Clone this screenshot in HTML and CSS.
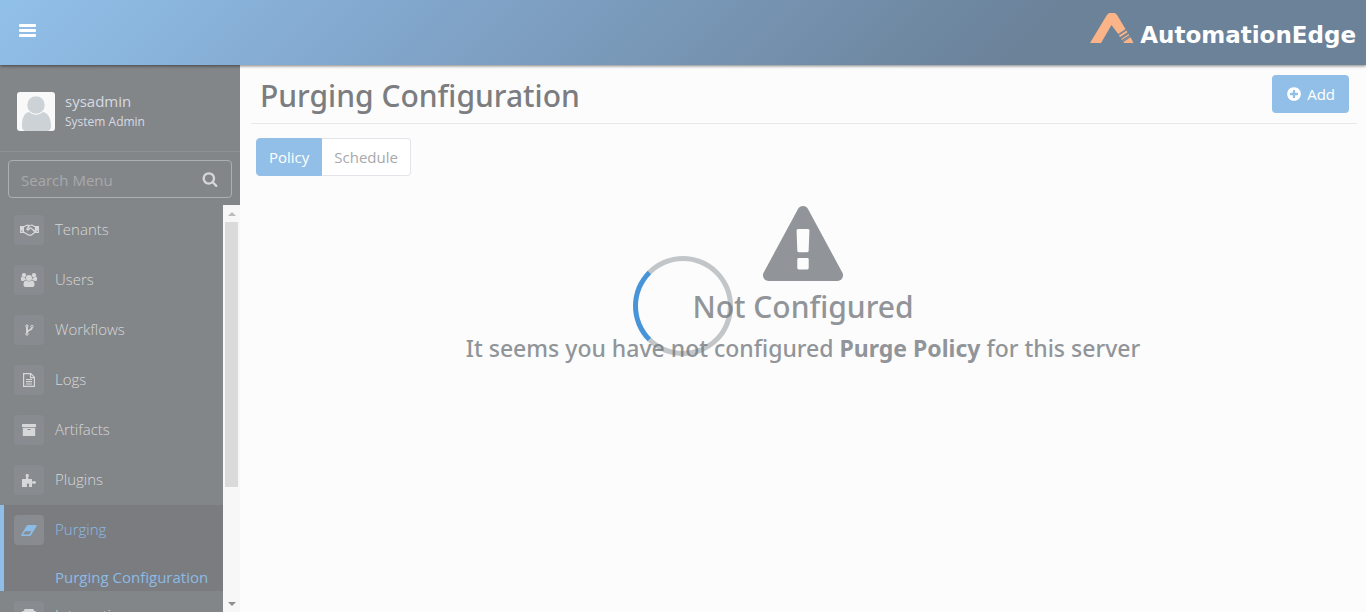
FILE: index.html
```html
<!DOCTYPE html>
<html lang="en">
<head>
<meta charset="utf-8">
<title>Purging Configuration - AutomationEdge</title>
<link rel="stylesheet" href="styles.css">
</head>
<body>
<header class="topbar">
  <button class="menu-toggle" type="button" aria-label="Toggle menu">
    <svg width="17" height="13" viewBox="0 0 17 13"><rect width="17" height="3" rx="1"/><rect y="5" width="17" height="3" rx="1"/><rect y="10" width="17" height="3" rx="1"/></svg>
  </button>
  <a class="brand" href="#">
    <svg width="44" height="31" viewBox="0 0 44 31" aria-hidden="true">
      <path fill="#fab487" d="M0 30 16 3.500Q18-.5 22-.5T28 3.500L36 17 29 22 21.500 12 11 30Z"/>
      <path fill="#fab487" d="M29 22.500 36.500 17.500 38 20 30.500 25ZM31.200 26 38.600 21 40 23.300 32.800 28ZM33.500 29 40.600 24.300 43.500 30H34Z"/>
      <path stroke="#6b8299" stroke-width="1.200" d="m27 22.500 10-6.500M29 25.500l10-6.500M30.500 28.500l10-6.500"/>
    </svg>
    <span class="brand-name">AutomationEdge</span>
  </a>
</header>
<div class="shell">
  <aside class="sidebar">
    <div class="profile">
      <svg class="avatar" width="38" height="39" viewBox="0 0 38 39" aria-hidden="true"><rect width="38" height="39" rx="3" fill="#f9f9f9"/><path fill="#cdd2d6" d="M5 34C5 26 7 21 12 20q7 5 14 0c5 1 8 6 8 14q0 4-3 5H8q-3-1-3-5Z"/><circle cx="19" cy="13" r="9.200" fill="#cdd2d6" stroke="#f9f9f9"/></svg>
      <div class="profile-text"><span class="user-name">sysadmin</span><span class="user-role">System Admin</span></div>
    </div>
    <form class="search">
      <input type="text" placeholder="Search Menu" aria-label="Search Menu">
      <button type="button" aria-label="Search"><svg width="16" height="16" viewBox="0 0 1792 1792"><path d="M1216 832q0-185-131.500-316.500t-316.500-131.500-316.500 131.500-131.500 316.500 131.500 316.500 316.500 131.500 316.500-131.500 131.500-316.500zm512 832q0 52-38 90t-90 38q-54 0-90-38l-343-342q-179 124-399 124-143 0-273.500-55.500t-225-150-150-225-55.500-273.500 55.500-273.500 150-225 225-150 273.500-55.500 273.500 55.500 225 150 150 225 55.500 273.500q0 220-124 399l343 343q37 37 37 90z"/></svg></button>
    </form>
    <div class="menu-area">
      <nav class="menu">
        <a class="item" href="#"><span class="tile"><svg width="19" height="12" viewBox="0 0 19 12"><path fill-rule="evenodd" d="M0 2h4l3-1.500 2.500.5L12 .500 15 2h4v7h-4l-3.500 2.700H8.500L4 9H0ZM1.200 6.500v1.200h1.200V6.500ZM16.600 6.500v1.200h1.200V6.500ZM4 3.300v4.200l4.700 3h2.500l3-2.600L10.500 4.600 9 6.300c-1.500 1-3-.2-2.500-1.500L8 2 7 1.800ZM8 5.200l2.500-2.300L14.800 6.500V3.300L12 1.800H10Z"/></svg></span><span class="label">Tenants</span></a>
        <a class="item" href="#"><span class="tile"><svg width="16" height="14" viewBox="0 0 16 14"><circle cx="3" cy="2.200" r="2.100"/><circle cx="13" cy="2.200" r="2.100"/><path d="M0 7V5q0-1.500 1.200-1.200Q3 5 4.300 4.200 4 6 5 7 3.500 7 2.500 8H1.200Q0 8 0 7ZM16 7V5q0-1.500-1.200-1.200Q13 5 11.700 4.200 12 6 11 7q1.500 0 2.500 1h1.300Q16 8 16 7Z"/><circle cx="8" cy="5" r="3"/><path d="M2.500 12q0-4.500 2.700-4.500 2.800 2 5.600 0 2.700 0 2.700 4.500 0 2-2 2h-7q-2 0-2-2Z"/></svg></span><span class="label">Users</span></a>
        <a class="item" href="#"><span class="tile"><svg width="9" height="12" viewBox="0 0 9 12"><g fill="none" stroke="currentColor"><circle cx="2" cy="2" r="1.200"/><circle cx="2" cy="10" r="1.200"/><circle cx="7" cy="2.500" r="1.200"/><path stroke-width="1.800" d="M2 3v6M7 3.500C7 6.500 2.500 5.500 2.200 8.500"/></g></svg></span><span class="label">Workflows</span></a>
        <a class="item" href="#"><span class="tile"><svg width="12" height="14" viewBox="0 0 12 14"><path fill="none" stroke="currentColor" stroke-width="1.200" d="M.6.6h7.200l3.600 3.600v9.200H.6ZM7.500.6v4h4M3 6.500h6M3 8.700h6M3 11h6"/></svg></span><span class="label">Logs</span></a>
        <a class="item" href="#"><span class="tile"><svg width="14" height="12" viewBox="0 0 14 12"><path fill-rule="evenodd" d="M.5 0h13q.5 0 .5.500V3H0V.500Q0 0 .5 0ZM.8 3.700h12.400V11.500q0 .5-.5.500H1.300q-.5 0-.5-.5ZM5.500 4.900v1h3v-1Z"/></svg></span><span class="label">Artifacts</span></a>
        <a class="item" href="#"><span class="tile"><svg width="14" height="13" viewBox="0 0 14 13"><path d="M0 5h3.700Q4.700 4 4 3 2.800 0 5.200 0T6.400 3Q5.700 4 6.700 5H10V7.200Q10.500 8 11.500 7.200C14.800 6.300 14.800 10.800 11.500 9.700Q10.500 9 10 9.700V13H7Q6.700 12 7.200 11.300C7.700 9 4.300 9 4.800 11.300Q5.300 12 4.800 13H0Z"/></svg></span><span class="label">Plugins</span></a>
        <div class="group">
          <a class="item active" href="#"><span class="tile"><svg width="16" height="11" viewBox="0 0 16 11"><path fill-rule="evenodd" d="M6.800 0h8q1.200 0 .9 1L10.300 9.700Q9.500 11 8.300 11h-7Q-.3 11 .3 9.500L5.700.800Q6.200 0 6.800 0ZM2 9.500h6l2.500-3.200H4.300Z"/></svg></span><span class="label">Purging</span></a>
          <a class="subitem" href="#">Purging Configuration</a>
        </div>
        <a class="item" href="#"><span class="tile"><svg width="14" height="14" viewBox="0 0 14 14"><path d="M3 0h8q1 0 1 2h1q1 0 1 1v8h-3v3H3v-3H0V3q0-1 1-1h1q0-2 1-2Z"/></svg></span><span class="label">Integration</span></a>
      </nav>
      <div class="scrollbar" aria-hidden="true"><span class="arrow up"></span><span class="track"><span class="thumb"></span></span><span class="arrow down"></span></div>
    </div>
  </aside>
  <main class="content">
    <div class="page-head">
      <h1>Purging Configuration</h1>
      <button class="add" type="button"><svg width="16" height="16" viewBox="0 0 1792 1792"><path d="M1344 960v-128q0-26-19-45t-45-19h-256v-256q0-26-19-45t-45-19h-128q-26 0-45 19t-19 45v256h-256q-26 0-45 19t-19 45v128q0 26 19 45t45 19h256v256q0 26 19 45t45 19h128q26 0 45-19t19-45v-256h256q26 0 45-19t19-45zm320-64q0 209-103 385.500t-279.500 279.500-385.500 103-385.500-103-279.500-279.500-103-385.500 103-385.500 279.500-279.500 385.500-103 385.500 103 279.500 279.500 103 385.500z"/></svg>Add</button>
    </div>
    <div class="tabs"><button class="tab selected" type="button">Policy</button><button class="tab" type="button">Schedule</button></div>
    <section class="empty">
      <svg width="80" height="75" viewBox="0 0 1792 1664" preserveAspectRatio="none" aria-hidden="true"><path d="M1024 1375v-190q0-14-9.500-23.500t-22.500-9.500h-192q-13 0-22.500 9.500t-9.500 23.500v190q0 14 9.500 23.500t22.500 9.500h192q13 0 22.500-9.500t9.500-23.500zm-2-374l18-459q0-12-10-19-13-11-24-11h-220q-11 0-24 11-10 7-10 21l17 457q0 10 10 16.500t24 6.500h185q14 0 23.500-6.500t10.500-16.500zm-14-934l768 1408q35 63-2 126-17 29-46.500 46t-63.500 17h-1536q-34 0-63.500-17t-46.500-46q-37-63-2-126l768-1408q17-31 47-49t65-18 65 18 47 49z"/></svg>
      <h2>Not Configured</h2>
      <p>It seems you have not configured <strong>Purge Policy</strong> for this server</p>
    </section>
  </main>
</div>
<div class="spinner" role="status" aria-label="Loading"></div>
</body>
</html>
```
FILE: styles.css
```css
* { box-sizing: border-box; }
body {
  margin: 0;
  height: 100vh;
  display: flex;
  flex-direction: column;
  overflow: hidden;
  background: #fcfcfc;
  color: #7b7d80;
  font: 16px/24px "Open Sans", "Noto Sans", sans-serif;
}
a { color: inherit; text-decoration: none; }
button, input { font: inherit; color: inherit; }
button { cursor: pointer; }
svg { display: block; fill: currentColor; flex: none; }

.topbar {
  position: relative;
  z-index: 1;
  flex: none;
  height: 65px;
  display: flex;
  align-items: center;
  justify-content: space-between;
  padding: 0 10px 5px 19px;
  background: linear-gradient(135deg, #91c0e9 0%, #84aad1 25%, #6b8299 75%);
  box-shadow: 0 1px 3px rgba(0, 0, 0, .5);
  color: #fff;
}
.menu-toggle { border: 0; background: none; padding: 0; }
.brand { display: flex; align-items: flex-start; gap: 6px; }
.brand-name { font: bold 23px/24px "DejaVu Sans", sans-serif; padding-top: 10px; }

.shell { flex: 1; min-height: 0; display: flex; }
.sidebar {
  flex: none;
  width: 240px;
  display: flex;
  flex-direction: column;
  background: #838689;
  color: #d6d7d8;
}
.profile {
  display: flex;
  align-items: center;
  gap: 10px;
  height: 87px;
  padding: 6px 17px 0;
  border-bottom: 1px solid #8e9194;
}
.profile-text { display: flex; flex-direction: column; padding-top: 2px; color: #d6dae1; }
.user-name { font-size: 15px; line-height: 20px; }
.user-role { font-size: 12px; line-height: 22px; }
.search {
  display: flex;
  align-items: center;
  height: 38px;
  margin: 8px 8px 7px;
  padding: 0 13px 0 12px;
  border: 1px solid #adafb2;
  border-radius: 4px;
}
.search input {
  flex: 1;
  min-width: 0;
  padding: 1px 0 0;
  border: 0;
  outline: 0;
  background: none;
  font-size: 15px;
}
.search input::placeholder { color: #a7a9ab; opacity: 1; }
.search button { border: 0; background: none; padding: 0; }

.menu-area { flex: 1; min-height: 0; display: flex; }
.menu { flex: 1; min-width: 0; overflow: hidden; font-size: 15px; font-weight: 300; }
.item {
  display: flex;
  align-items: center;
  gap: 11px;
  height: 50px;
  padding-left: 14px;
}
.label { padding-bottom: 2px; }
.tile {
  display: grid;
  place-items: center;
  width: 30px;
  height: 30px;
  border-radius: 4px;
  background: #888b8f;
}
.group {
  background: #7b7c7f;
  color: #8cbbe6;
  border-left: 4px solid #8fbfe8;
}
.group .item { padding-left: 10px; }
.subitem {
  display: block;
  height: 36px;
  padding-left: 51px;
  line-height: 44px;
  font-weight: 400;
  white-space: nowrap;
}
.scrollbar {
  flex: none;
  width: 17px;
  display: flex;
  flex-direction: column;
  background: #f7f7f7;
}
.arrow { height: 17px; display: grid; place-items: center; }
.arrow::before { content: ""; border: 4px solid transparent; }
.up::before { border-top: 0; border-bottom-color: #bcbcbc; }
.down::before { border-bottom: 0; border-top-color: #8e8e8e; }
.track { flex: 1; padding: 0 2px; }
.thumb { display: block; height: 71%; background: #dadada; }

.content { flex: 1; min-width: 0; padding: 0 9px 0 11px; }
.page-head {
  display: flex;
  align-items: center;
  justify-content: space-between;
  height: 59px;
  padding: 0 8px 0 9px;
  border-bottom: 1px solid #e6e7e8;
}
h1, h2, p { margin: 0; font-family: "Noto Sans", "Open Sans", sans-serif; font-weight: 500; }
h1 { font-size: 30px; line-height: 40px; padding-top: 4px; }
.add {
  display: flex;
  align-items: center;
  gap: 5px;
  height: 38px;
  padding: 0 14px;
  border: 0;
  border-radius: 4px;
  background: #91bfe7;
  color: #fff;
  font-size: 15px;
}
.tabs { display: flex; padding: 14px 5px 0; }
.tab {
  height: 38px;
  padding: 0 12px;
  border: 1px solid #e2e4e9;
  border-left-width: 0;
  border-radius: 0 4px 4px 0;
  background: #fff;
  color: #a7a9ac;
  font-size: 15px;
}
.tab.selected {
  border-color: #91bfe7;
  border-left-width: 1px;
  border-radius: 4px 0 0 4px;
  background: #91bfe7;
  color: #fff;
}
.empty {
  display: flex;
  flex-direction: column;
  align-items: center;
  padding: 30px 2px 0 0;
  color: #919599;
  text-align: center;
}
.empty h2 { padding-top: 6px; font-size: 30px; line-height: 40px; }
.empty p { padding-top: 5px; font-size: 23px; line-height: 32px; }
.empty strong { font-weight: 700; }
.spinner {
  position: fixed;
  inset: 0;
  margin: auto;
  width: 100px;
  height: 100px;
  border: 5px solid rgba(108, 117, 125, .4);
  border-left-color: #4794d9;
  border-radius: 50%;
}
```
